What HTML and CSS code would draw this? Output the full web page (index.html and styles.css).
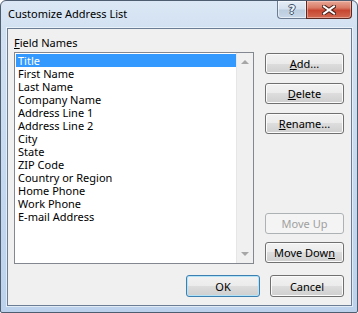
FILE: index.html
```html
<!DOCTYPE html>
<html>
<head>
<meta charset="utf-8">
<link rel="stylesheet" href="styles.css">
</head>
<body>
<div class="window">
  <div class="titlebar">
    <span class="title">Customize Address List</span>
    <div class="caption-btns">
      <div class="cbtn help">?</div>
      <div class="cbtn close">
        <svg width="14" height="10" viewBox="0 0 14 10">
          <path d="M2 1.5 L12 8.5 M12 1.5 L2 8.5" stroke="#4a2018" stroke-width="4" stroke-linecap="square"/>
          <path d="M2 1.5 L12 8.5 M12 1.5 L2 8.5" stroke="#ffffff" stroke-width="2" stroke-linecap="square"/>
        </svg>
      </div>
    </div>
  </div>
  <div class="client">
    <div class="main">
      <div class="left">
        <div class="label"><u>F</u>ield Names</div>
        <div class="listbox">
          <ul class="items">
            <li class="item selected">Title</li>
            <li class="item">First Name</li>
            <li class="item">Last Name</li>
            <li class="item">Company Name</li>
            <li class="item">Address Line 1</li>
            <li class="item">Address Line 2</li>
            <li class="item">City</li>
            <li class="item">State</li>
            <li class="item">ZIP Code</li>
            <li class="item">Country or Region</li>
            <li class="item">Home Phone</li>
            <li class="item">Work Phone</li>
            <li class="item">E-mail Address</li>
          </ul>
          <div class="scrollbar">
            <div class="arrow up"></div>
            <div class="arrow down"></div>
          </div>
        </div>
      </div>
      <div class="right">
        <div class="btn-group top">
          <div class="btn"><span><u>A</u>dd...</span></div>
          <div class="btn"><span><u>D</u>elete</span></div>
          <div class="btn"><span><u>R</u>ename...</span></div>
        </div>
        <div class="btn-group move">
          <div class="btn disabled"><span>Move Up</span></div>
          <div class="btn"><span>Move Dow<u>n</u></span></div>
        </div>
      </div>
    </div>
    <div class="footer">
      <div class="btn wide default"><span>OK</span></div>
      <div class="btn wide"><span>Cancel</span></div>
    </div>
  </div>
</div>
</body>
</html>
```
FILE: styles.css
```css
html, body {
  margin: 0;
  padding: 0;
  width: 358px;
  height: 313px;
  overflow: hidden;
  background: #ffffff;
}

.window {
  box-sizing: border-box;
  width: 358px;
  height: 313px;
  border: 1px solid #4f5d70;
  border-radius: 6px 6px 2px 2px;
  background: linear-gradient(#dbe7f4 0px, #d2e1f2 28px, #c4d8ef 60%, #bcd2ec 100%);
  padding: 0 5px 6px 6px;
  display: flex;
  flex-direction: column;
  font-family: "Noto Sans", "Open Sans", sans-serif;
  font-size: 11px;
  color: #000;
}

.titlebar {
  height: 27px;
  display: flex;
  align-items: flex-start;
  justify-content: space-between;
  flex: none;
}

.title {
  padding: 5px 0 0 1px;
  line-height: 15px;
  font-size: 11px;
  color: #000;
}

.caption-btns {
  display: flex;
  margin-right: 0;
}

.cbtn {
  box-sizing: border-box;
  height: 18px;
  display: flex;
  align-items: center;
  justify-content: center;
}

.help {
  width: 29px;
  border: 1px solid #6b7c92;
  border-top: none;
  border-right: none;
  border-radius: 0 0 0 4px;
  background: linear-gradient(#e6eef7 0%, #d5e1ee 45%, #bccddf 55%, #c9d8e9 100%);
  box-shadow: inset 0 0 0 1px rgba(255,255,255,0.55);
  color: #eef3f9;
  font-family: "DejaVu Sans", sans-serif;
  font-weight: bold;
  font-size: 12px;
  line-height: 12px;
  text-shadow: 1px 0 0 #3d5068, -1px 0 0 #3d5068, 0 1px 0 #3d5068, 0 -1px 0 #3d5068;
}

.close {
  width: 46px;
  border: 1px solid #5a2a22;
  border-top: none;
  border-radius: 0 0 4px 0;
  background: linear-gradient(#e8a898 0%, #d97b66 40%, #c74631 55%, #d26a52 100%);
  box-shadow: inset 0 0 0 1px rgba(255,220,210,0.45);
}

.close svg {
  display: block;
}

.client {
  flex: 1;
  box-sizing: border-box;
  border: 1px solid #6b7d94;
  box-shadow: 0 0 0 1px rgba(255,255,255,0.55);
  background: #f0f0f0;
  padding: 6px 7px 8px 6px;
  display: flex;
  flex-direction: column;
}

.main {
  display: flex;
  gap: 11px;
}

.left {
  display: flex;
  flex-direction: column;
}

.label {
  line-height: 15px;
  height: 15px;
  margin-bottom: 2px;
}

.listbox {
  box-sizing: border-box;
  width: 240px;
  height: 212px;
  border: 1px solid #828790;
  background: #fff;
  display: flex;
}

.items {
  list-style: none;
  margin: 0;
  padding: 1px 0 0 1px;
  flex: 1;
}

.item {
  height: 13px;
  line-height: 13px;
  padding-left: 2px;
  white-space: nowrap;
}

.item.selected {
  background: #3399ff;
  color: #fff;
}

.scrollbar {
  width: 17px;
  flex: none;
  background: #f0f0f0;
  border-left: 1px solid #e6e6e6;
  box-sizing: border-box;
  display: flex;
  flex-direction: column;
  justify-content: space-between;
  align-items: center;
  padding: 7px 0 7px 0;
}

.arrow {
  width: 0;
  height: 0;
  border-left: 4px solid transparent;
  border-right: 4px solid transparent;
}

.arrow.up {
  border-bottom: 4px solid #a6a6a6;
}

.arrow.down {
  border-top: 4px solid #a6a6a6;
}

.right {
  display: flex;
  flex-direction: column;
  justify-content: space-between;
  padding-top: 18px;
  padding-bottom: 1px;
}

.btn-group {
  display: flex;
  flex-direction: column;
}

.btn-group.top {
  gap: 9px;
}

.btn-group.move {
  gap: 8px;
}

.btn {
  box-sizing: border-box;
  width: 79px;
  height: 21px;
  border: 1px solid #707070;
  border-radius: 3px;
  background: linear-gradient(#f2f2f2 0%, #ebebeb 50%, #dddddd 50%, #cfcfcf 100%);
  box-shadow: inset 0 0 0 1px #fbfbfb;
  display: flex;
  align-items: center;
  justify-content: center;
  line-height: 13px;
}

.btn.disabled {
  border-color: #adb2b5;
  background: #f4f4f4;
  box-shadow: none;
  color: #a0a0a0;
}

.footer {
  margin-top: 11px;
  display: flex;
  justify-content: flex-end;
  gap: 10px;
}

.btn.wide {
  width: 74px;
  height: 22px;
}

.btn.default {
  border-color: #3c7fb1;
  box-shadow: inset 0 0 0 1px #b4e3f8;
}
```
